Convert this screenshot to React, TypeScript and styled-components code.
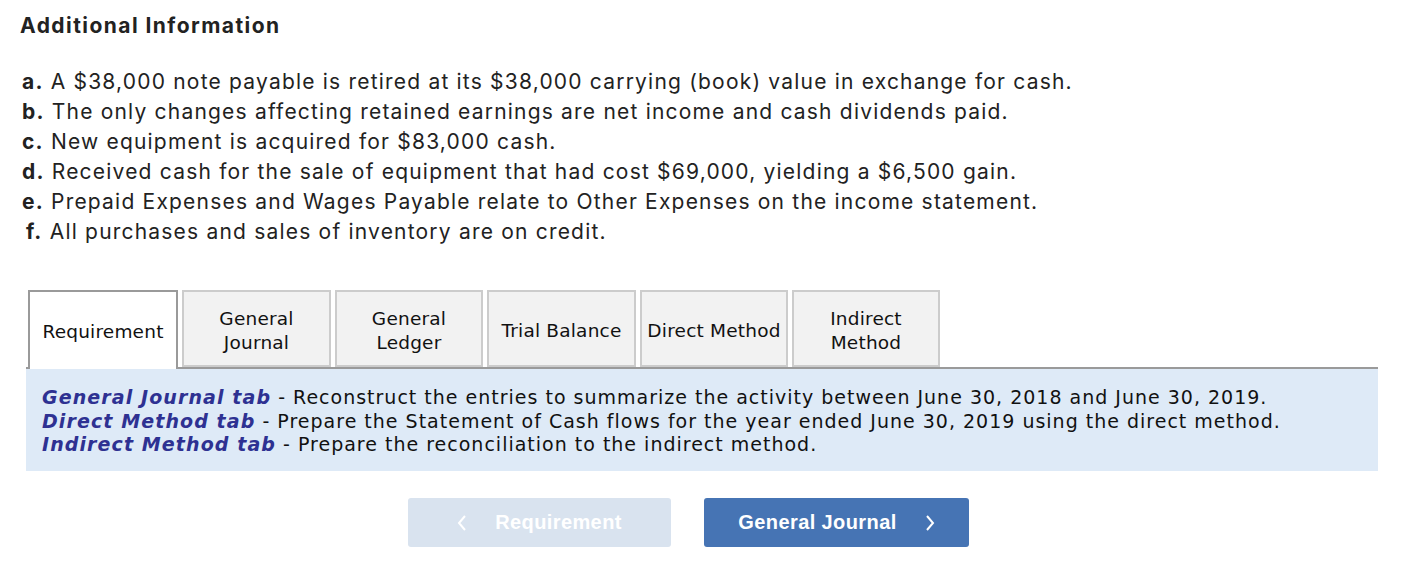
import React from 'react'
import styled, { createGlobalStyle } from 'styled-components'

const GlobalStyle = createGlobalStyle`
    body {
        margin: 0;
        background: #ffffff;
        font-family: 'Inter', 'Liberation Sans', sans-serif;
        color: #222;
    }
`

const items = [
    ['a.', 'A $38,000 note payable is retired at its $38,000 carrying (book) value in exchange for cash.'],
    ['b.', 'The only changes affecting retained earnings are net income and cash dividends paid.'],
    ['c.', 'New equipment is acquired for $83,000 cash.'],
    ['d.', 'Received cash for the sale of equipment that had cost $69,000, yielding a $6,500 gain.'],
    ['e.', 'Prepaid Expenses and Wages Payable relate to Other Expenses on the income statement.'],
    ['f.', 'All purchases and sales of inventory are on credit.'],
]

const tabs = [
    { label: 'Requirement', width: 150, active: true },
    { label: 'General\nJournal', width: 149 },
    { label: 'General\nLedger', width: 148 },
    { label: 'Trial Balance', width: 149 },
    { label: 'Direct Method', width: 148 },
    { label: 'Indirect\nMethod', width: 148 },
]

const notes = [
    ['General Journal tab', 'Reconstruct the entries to summarize the activity between June 30, 2018 and June 30, 2019.'],
    ['Direct Method tab', 'Prepare the Statement of Cash flows for the year ended June 30, 2019 using the direct method.'],
    ['Indirect Method tab', 'Prepare the reconciliation to the indirect method.'],
]

const App = () => {
    return (
        <Page>
            <GlobalStyle />
            <Heading>Additional Information</Heading>
            <List>
                {items.map(([letter, text], idx) => (
                    <Item key={idx} $indent={letter === 'f.'}>
                        <b>{letter}</b> {text}
                    </Item>
                ))}
            </List>
            <TabRow>
                {tabs.map((tab, idx) => (
                    <Tab key={idx} $active={!!tab.active} $width={tab.width}>
                        {tab.label}
                    </Tab>
                ))}
            </TabRow>
            <Panel>
                {notes.map(([title, text], idx) => (
                    <Note key={idx}>
                        <NoteTitle>{title}</NoteTitle> - {text}
                    </Note>
                ))}
            </Panel>
            <Nav>
                <NavButton $disabled>
                    <Chevron viewBox="0 0 10 18">
                        <path d="M8 2 L2 9 L8 16" />
                    </Chevron>
                    Requirement
                </NavButton>
                <NavButton>
                    General Journal
                    <Chevron viewBox="0 0 10 18">
                        <path d="M2 2 L8 9 L2 16" />
                    </Chevron>
                </NavButton>
            </Nav>
        </Page>
    )
}

export default App

const Page = styled.div`
    padding: 13px 30px 0 20px;
    width: 1408px;
    box-sizing: border-box;
`

const Heading = styled.h2`
    margin: 0;
    font-size: 21px;
    font-weight: 700;
    line-height: 26px;
    letter-spacing: 1.45px;
    color: #222;
`

const List = styled.div`
    margin-top: 28px;
    padding-left: 2px;
`

const Item = styled.div<{ $indent?: boolean }>`
    font-size: 21px;
    line-height: 30px;
    letter-spacing: 1.2px;
    color: #222;
    padding-left: ${(p) => (p.$indent ? '4px' : '0')};

    b {
        font-weight: 700;
    }
`

const TabRow = styled.div`
    display: flex;
    gap: 4px;
    margin-top: 43px;
    margin-left: 8px;
    align-items: flex-end;
    position: relative;
    z-index: 1;
`

const Tab = styled.div<{ $active: boolean; $width: number }>`
    width: ${(p) => p.$width}px;
    height: ${(p) => (p.$active ? 79 : 77)}px;
    margin-bottom: ${(p) => (p.$active ? -2 : 0)}px;
    box-sizing: border-box;
    display: flex;
    align-items: center;
    justify-content: center;
    text-align: center;
    white-space: pre-line;
    font-family: 'DejaVu Sans', Verdana, sans-serif;
    font-size: 18.5px;
    letter-spacing: 0.2px;
    line-height: 24px;
    color: #111;
    background: ${(p) => (p.$active ? '#ffffff' : '#f2f2f2')};
    border: 2px solid ${(p) => (p.$active ? '#9a9a9a' : '#cccccc')};
    border-bottom: ${(p) => (p.$active ? 'none' : '2px solid #cccccc')};
    padding-top: ${(p) => (p.$active ? 2 : 4)}px;
`

const Panel = styled.div`
    margin-left: 6px;
    background: #deeaf7;
    border-top: 2px solid #9a9a9a;
    padding: 17px 16px 16px;
    box-sizing: border-box;
    height: 104px;
`

const Note = styled.div`
    font-family: 'DejaVu Sans', Verdana, sans-serif;
    font-size: 19px;
    letter-spacing: 1px;
    line-height: 23.5px;
    color: #111;
    white-space: nowrap;
`

const NoteTitle = styled.span`
    color: #2e3192;
    font-weight: 700;
    font-style: italic;
    letter-spacing: 1.1px;
`

const Nav = styled.div`
    display: flex;
    justify-content: center;
    gap: 33px;
    margin-top: 27px;
    padding-right: 21px;
`

const NavButton = styled.div<{ $disabled?: boolean }>`
    width: ${(p) => (p.$disabled ? 263 : 265)}px;
    height: 49px;
    border-radius: 3px;
    display: flex;
    align-items: center;
    justify-content: center;
    gap: 28px;
    font-family: 'Liberation Sans', Arial, sans-serif;
    font-weight: 700;
    font-size: 20px;
    letter-spacing: 0.4px;
    color: #ffffff;
    background: ${(p) => (p.$disabled ? '#d9e3ef' : '#4674b4')};
`

const Chevron = styled.svg`
    width: 10px;
    height: 18px;
    fill: none;
    stroke: #ffffff;
    stroke-width: 2;
`
